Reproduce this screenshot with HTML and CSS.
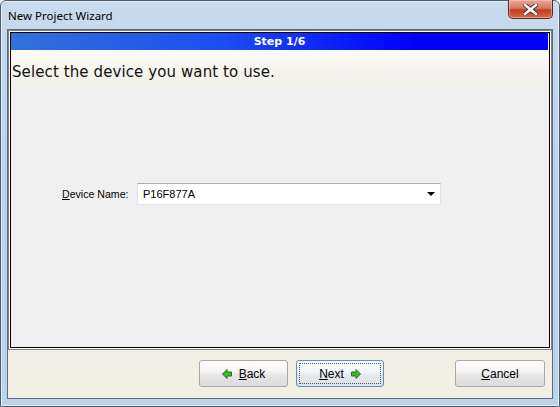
FILE: index.html
```html
<!DOCTYPE html>
<html lang="en">
<head>
    <meta charset="UTF-8">
    <title>New Project Wizard</title>
    <link rel="stylesheet" href="styles.css">
</head>
<body>
    <div class="window">
        <div class="titlebar">
            <span class="title">New Project Wizard</span>
            <div class="close">
                <svg width="15" height="11" viewBox="0 0 15 11">
                    <path d="M2 1 L13 10 M13 1 L2 10" stroke="#4a3a38" stroke-width="4.4" stroke-linecap="square"/>
                    <path d="M2 1 L13 10 M13 1 L2 10" stroke="#ffffff" stroke-width="2.4" stroke-linecap="square"/>
                </svg>
            </div>
        </div>
        <div class="client">
            <div class="panel">
                <div class="panel-inner">
                    <div class="step">Step 1/6</div>
                    <div class="heading">Select the device you want to use.</div>
                    <div class="form-row">
                        <label class="field-label" for="device"><u>D</u>evice Name:</label>
                        <div class="combo" id="device">
                            <span>P16F877A</span>
                            <span class="combo-arrow"></span>
                        </div>
                    </div>
                </div>
            </div>
            <div class="buttons">
                <button class="btn">
                    <svg width="10" height="10" viewBox="0 0 10 10">
                        <polygon points="0.5,5 5,0.5 5,3 9.5,3 9.5,7 5,7 5,9.5" fill="#46b52c" stroke="#23731a" stroke-width="1"/>
                    </svg>
                    <span><u>B</u>ack</span>
                </button>
                <button class="btn btn-default">
                    <span><u>N</u>ext</span>
                    <svg width="10" height="10" viewBox="0 0 10 10">
                        <polygon points="9.5,5 5,0.5 5,3 0.5,3 0.5,7 5,7 5,9.5" fill="#46b52c" stroke="#23731a" stroke-width="1"/>
                    </svg>
                </button>
                <button class="btn btn-cancel"><span><u>C</u>ancel</span></button>
            </div>
        </div>
    </div>
</body>
</html>
```

FILE: styles.css
```css
body {
    margin: 0;
    padding: 0;
    background: #ffffff;
    font-family: "Liberation Sans", Arial, sans-serif;
}

.window {
    width: 560px;
    height: 407px;
    box-sizing: border-box;
    border: 1px solid #4d5d70;
    border-radius: 6px 6px 0 0;
    background: linear-gradient(to bottom, #c7daee, #b9d1ea 60%, #bcd3ea);
    box-shadow: inset 0 0 0 1px rgba(255, 255, 255, 0.55);
    display: flex;
    flex-direction: column;
}

.titlebar {
    height: 28px;
    display: flex;
    align-items: center;
    padding-left: 7px;
}

.title {
    font-family: "Noto Sans", sans-serif;
    font-size: 11.5px;
    color: #000;
}

.close {
    margin-left: auto;
    margin-right: 6px;
    align-self: flex-start;
    margin-top: -1px;
    width: 43px;
    height: 18px;
    border: 1px solid #5a2a20;
    border-top: none;
    border-radius: 0 0 5px 5px;
    background: linear-gradient(to bottom, #e9a897, #d47a64 45%, #c23d20 55%, #d5694c);
    display: flex;
    align-items: center;
    justify-content: center;
    box-shadow: inset 0 0 0 1px rgba(255, 210, 200, 0.5);
}

.client {
    margin: 0 6px;
    height: 370px;
    box-sizing: border-box;
    border: 1px solid #5b6b7c;
    background: linear-gradient(to bottom, #fcfbf8, #f1eee3);
    display: flex;
    flex-direction: column;
}

.panel {
    height: 320px;
    box-sizing: border-box;
    border: 1px solid #808080;
    padding: 1px;
    background: #ffffff;
}

.panel-inner {
    height: 100%;
    box-sizing: border-box;
    border: 1px solid #000;
    background: #f0f0f0;
}

.step {
    height: 17px;
    background: linear-gradient(to right, #3172dc, #1b4df0 40%, #0000ff 75%, #0000ff);
    color: #fff;
    font-family: "DejaVu Sans", Verdana, sans-serif;
    font-weight: bold;
    font-size: 11px;
    line-height: 17px;
    text-align: center;
    margin-right: 1px;
}

.heading {
    height: 36px;
    padding-top: 4px;
    padding-left: 1px;
    background: linear-gradient(to bottom, #fcfbf7, #f3f1e8 80%, #f0f0f0);
    font-family: "DejaVu Sans", Verdana, sans-serif;
    font-size: 15px;
    letter-spacing: 0.1px;
    line-height: 36px;
    color: #111;
}

.form-row {
    display: flex;
    align-items: center;
    margin-top: 93px;
    padding-left: 51px;
    font-size: 11px;
}

.field-label {
    width: 66px;
    flex-shrink: 0;
    white-space: nowrap;
    text-align: right;
    margin-right: 9px;
    font-size: 10.6px;
    color: #000;
}

.combo {
    width: 304px;
    height: 22px;
    box-sizing: border-box;
    border: 1px solid #e2e3e6;
    border-top-color: #abadb3;
    background: #fff;
    display: flex;
    align-items: center;
    padding-left: 5px;
    color: #000;
}

.combo-arrow {
    margin-left: auto;
    margin-right: 5px;
    width: 0;
    height: 0;
    border-left: 4px solid transparent;
    border-right: 4px solid transparent;
    border-top: 4px solid #000;
}

.buttons {
    flex: 1;
    display: flex;
    align-items: flex-start;
    padding-top: 10px;
    padding-left: 191px;
}

.btn {
    width: 89px;
    height: 27px;
    box-sizing: border-box;
    border: 1px solid #a7a7a7;
    border-radius: 3px;
    background: linear-gradient(to bottom, #fefefe, #f4f4f4 45%, #e6e6e6 55%, #dcdcdc);
    font-family: "Liberation Sans", Arial, sans-serif;
    font-size: 12px;
    color: #000;
    display: flex;
    align-items: center;
    justify-content: center;
    gap: 7px;
    padding: 0;
}

.btn-default {
    width: 88px;
    margin-left: 8px;
    border-color: #5f8fbf;
    background: linear-gradient(to bottom, #fbfdff, #f1f5f9 45%, #e4e9ee 55%, #dde2e8);
    outline: 1px dotted #555;
    outline-offset: -4px;
}

.btn-cancel {
    width: 90px;
    margin-left: 71px;
}
```
